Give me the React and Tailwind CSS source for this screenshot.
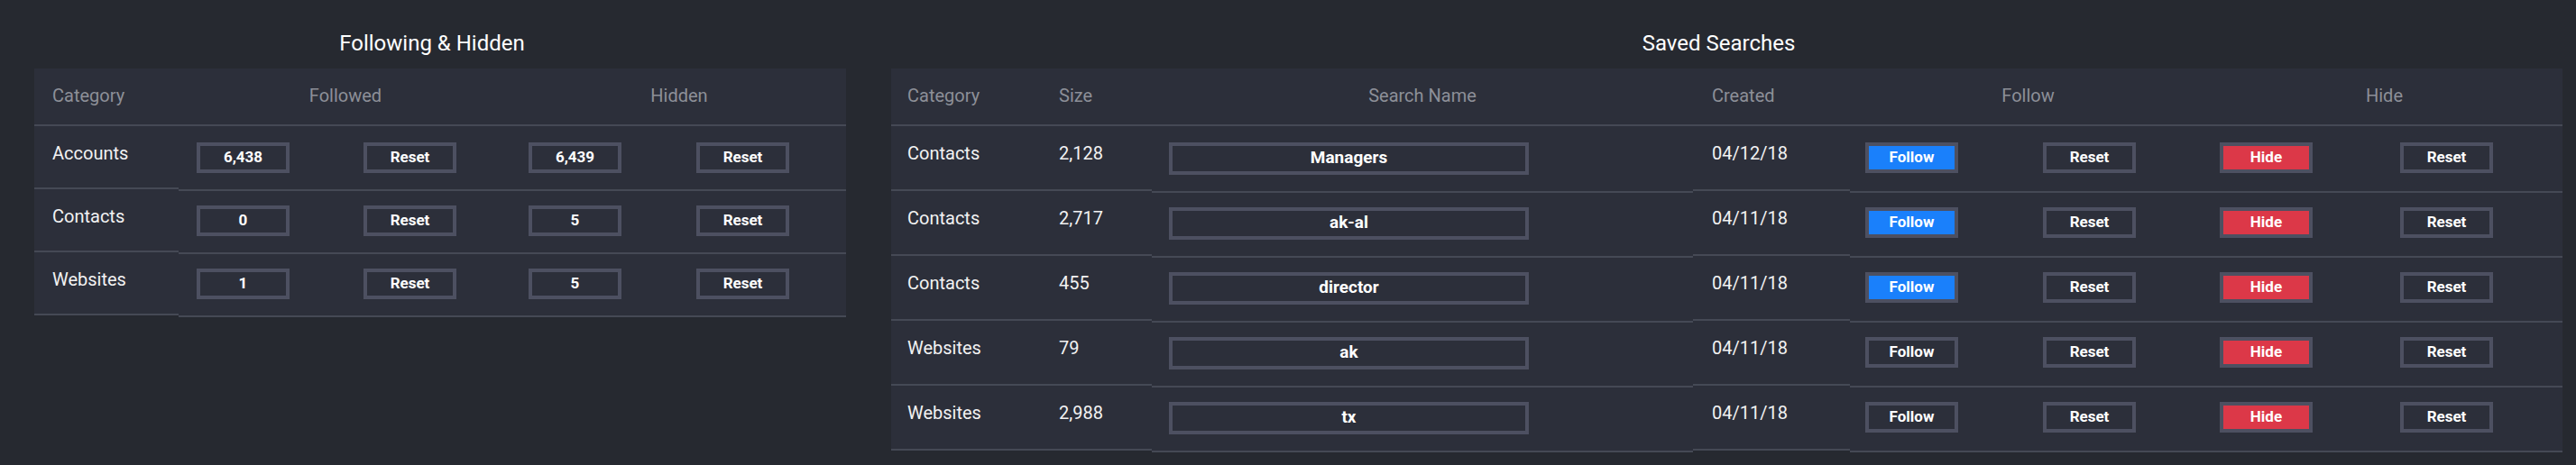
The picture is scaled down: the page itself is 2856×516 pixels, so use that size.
import React from "react";

const roboto = "font-['Roboto',sans-serif]";

function Box({ children, className = "w-[103px] h-[34px]", fill = "", text = "text-[17px]" }) {
  return (
    <div
      className={`${className} border-4 border-[#4d5061] flex items-center justify-center text-white font-['Roboto',sans-serif] font-bold ${text} ${fill}`}
    >
      <span className="-mt-[2px] leading-[20px]">{children}</span>
    </div>
  );
}

const leftRows = [
  ["Accounts", "6,438", "6,439"],
  ["Contacts", "0", "5"],
  ["Websites", "1", "5"],
];

const rightRows = [
  ["Contacts", "2,128", "Managers", "04/12/18", true],
  ["Contacts", "2,717", "ak-al", "04/11/18", true],
  ["Contacts", "455", "director", "04/11/18", true],
  ["Websites", "79", "ak", "04/11/18", false],
  ["Websites", "2,988", "tx", "04/11/18", false],
];

const headCell = `pt-[18px] text-[20px] leading-[24px] text-[#8d8f98] ${roboto}`;
const textCell = `pt-[18px] text-[20px] leading-[24px] text-[#f2f2f2] ${roboto} border-b-2 border-[#454955]`;
const boxCell = `pt-[18px] border-b-2 border-[#454955]`;

function Title({ children }) {
  return (
    <div className={`h-[76px] pt-[34px] pr-[18px] text-center text-[24px] leading-[28px] text-white ${roboto}`}>
      {children}
    </div>
  );
}

export default function App() {
  return (
    <div className="w-[2856px] h-[516px] bg-[#262930] flex pl-[38px] gap-[50px]">
      <div className="w-[900px] flex flex-col">
        <Title>Following &amp; Hidden</Title>
        <div className="bg-[#2c2f3a]">
          <div className="flex h-[64px] border-b-2 border-[#454955]">
            <div className={`w-[160px] pl-[20px] ${headCell}`}>Category</div>
            <div className={`w-[370px] text-center ${headCell}`}>Followed</div>
            <div className={`flex-1 text-center ${headCell}`}>Hidden</div>
          </div>
          {leftRows.map((r) => (
            <div key={r[0]} className="flex h-[70px] items-start">
              <div className={`w-[160px] h-[70px] pl-[20px] ${textCell}`}>{r[0]}</div>
              <div className={`w-[185px] h-[72px] pl-[20px] ${boxCell}`}>
                <Box>{r[1]}</Box>
              </div>
              <div className={`w-[185px] h-[72px] pl-[20px] ${boxCell}`}>
                <Box>Reset</Box>
              </div>
              <div className={`w-[185px] h-[72px] pl-[18px] ${boxCell}`}>
                <Box>{r[2]}</Box>
              </div>
              <div className={`w-[185px] h-[72px] pl-[19px] ${boxCell}`}>
                <Box>Reset</Box>
              </div>
            </div>
          ))}
        </div>
      </div>

      <div className="w-[1853px] flex flex-col">
        <Title>Saved Searches</Title>
        <div className="bg-[#2c2f3a]">
          <div className="flex h-[64px] border-b-2 border-[#454955]">
            <div className={`w-[168px] pl-[18px] ${headCell}`}>Category</div>
            <div className={`w-[121px] pl-[18px] ${headCell}`}>Size</div>
            <div className={`w-[600px] text-center ${headCell}`}>Search Name</div>
            <div className={`w-[174px] pl-[21px] ${headCell}`}>Created</div>
            <div className={`w-[395px] text-center ${headCell}`}>Follow</div>
            <div className={`w-[395px] text-center ${headCell}`}>Hide</div>
          </div>
          {rightRows.map((r, i) => (
            <div key={i} className="flex h-[72px] items-start">
              <div className={`w-[168px] h-[72px] pl-[18px] ${textCell}`}>{r[0]}</div>
              <div className={`w-[121px] h-[72px] pl-[18px] ${textCell}`}>{r[1]}</div>
              <div className={`w-[600px] h-[74px] pl-[19px] ${boxCell}`}>
                <Box className="w-[399px] h-[36px]" text="text-[19px]">{r[2]}</Box>
              </div>
              <div className={`w-[174px] h-[72px] pl-[21px] ${textCell}`}>{r[3]}</div>
              <div className={`w-[197px] h-[74px] pl-[17px] ${boxCell}`}>
                <Box fill={r[4] ? "bg-[#1a80fb] [background-clip:padding-box]" : ""}>Follow</Box>
              </div>
              <div className={`w-[198px] h-[74px] pl-[17px] ${boxCell}`}>
                <Box>Reset</Box>
              </div>
              <div className={`w-[197px] h-[74px] pl-[15px] ${boxCell}`}>
                <Box fill="bg-[#dc3848] [background-clip:padding-box]">Hide</Box>
              </div>
              <div className={`w-[198px] h-[74px] pl-[18px] ${boxCell}`}>
                <Box>Reset</Box>
              </div>
            </div>
          ))}
        </div>
      </div>
    </div>
  );
}
